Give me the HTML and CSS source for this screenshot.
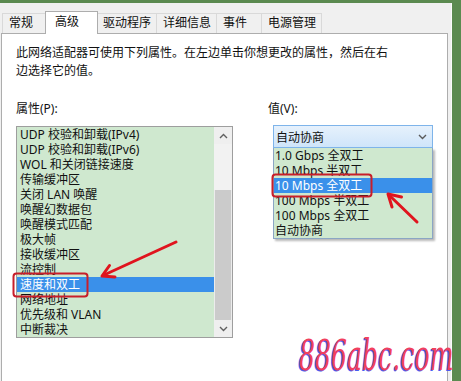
FILE: index.html
```html
<!DOCTYPE html>
<html lang="zh-CN">
<head>
<meta charset="utf-8">
<link rel="stylesheet" href="styles.css">
</head>
<body>
<div class="window">
  <div class="tabs">
    <div class="tab">常规</div>
    <div class="tab active">高级</div>
    <div class="tab">驱动程序</div>
    <div class="tab">详细信息</div>
    <div class="tab">事件</div>
    <div class="tab">电源管理</div>
  </div>
  <div class="panel">
    <p class="desc">此网络适配器可使用下列属性。在左边单击你想更改的属性，然后在右<br>边选择它的值。</p>
    <div class="cols">
      <div class="col-left">
        <div class="label">属性(P):</div>
        <div class="listbox">
          <ul class="items">
            <li>UDP 校验和卸载(IPv4)</li>
            <li>UDP 校验和卸载(IPv6)</li>
            <li>WOL 和关闭链接速度</li>
            <li>传输缓冲区</li>
            <li>关闭 LAN 唤醒</li>
            <li>唤醒幻数据包</li>
            <li>唤醒模式匹配</li>
            <li>极大帧</li>
            <li>接收缓冲区</li>
            <li>流控制</li>
            <li class="sel">速度和双工</li>
            <li>网络地址</li>
            <li>优先级和 VLAN</li>
            <li>中断裁决</li>
          </ul>
          <div class="scrollbar">
            <div class="sb-btn"><svg width="9" height="6" viewBox="0 0 9 6"><polyline points="1,5 4.5,1.5 8,5" fill="none" stroke="#606060" stroke-width="1.4"/></svg></div>
            <div class="sb-track"></div>
            <div class="sb-thumb"></div>
            <div class="sb-btn"><svg width="9" height="6" viewBox="0 0 9 6"><polyline points="1,1 4.5,4.5 8,1" fill="none" stroke="#606060" stroke-width="1.4"/></svg></div>
          </div>
        </div>
      </div>
      <div class="col-right">
        <div class="label">值(V):</div>
        <div class="combo-wrap">
          <div class="combo">
            <span>自动协商</span>
            <svg width="9" height="6" viewBox="0 0 9 6"><polyline points="1,1 4.5,4.5 8,1" fill="none" stroke="#5a5a5a" stroke-width="1.4"/></svg>
          </div>
          <ul class="dropdown">
            <li>1.0 Gbps 全双工</li>
            <li>10 Mbps 半双工</li>
            <li class="sel">10 Mbps 全双工</li>
            <li>100 Mbps 半双工</li>
            <li>100 Mbps 全双工</li>
            <li>自动协商</li>
          </ul>
        </div>
      </div>
    </div>
  </div>
</div>
<svg class="marks" width="461" height="381" viewBox="0 0 461 381">
  <g fill="none" stroke="#e0141e" stroke-width="3" stroke-linecap="round" stroke-linejoin="round">
    <line x1="176" y1="242" x2="104" y2="275"/>
    <polyline points="109.5,265.5 102,276 115,277"/>
    <line x1="417" y1="222" x2="390" y2="196"/>
    <polyline points="392,207 388,194 401.5,197"/>
  </g>
  <g fill="none" stroke="#c81e2a" stroke-width="2">
    <rect x="13.5" y="273.5" width="74" height="23" rx="3"/>
    <rect x="272.5" y="174.5" width="99" height="22" rx="3"/>
  </g>
</svg>
<div class="watermark">886abc.com</div>
</body>
</html>
```

FILE: styles.css
```css
html, body {
  margin: 0;
  padding: 0;
}
body {
  width: 461px;
  height: 381px;
  overflow: hidden;
  background: #5b8a50;
  position: relative;
  font-family: "Noto Sans", "Noto Sans CJK SC", sans-serif;
  font-size: 12px;
  color: #111;
}
.window {
  margin-top: 3px;
  width: 452px;
  height: 378px;
  box-sizing: border-box;
  background: #f0f0f0;
  border-right: 1px solid #fbfbfb;
  padding: 8px 0 0 1px;
}
.tabs {
  display: flex;
  align-items: flex-end;
  height: 23px;
  padding-left: 1px;
  margin-bottom: -1px;
  position: relative;
  z-index: 1;
}
.tab {
  box-sizing: border-box;
  height: 20px;
  margin-bottom: 1px;
  min-width: 46px;
  padding: 0 5px 0 6px;
  border: 1px solid #d9d9d9;
  border-bottom: none;
  margin-right: -1px;
  background: #f0f0f0;
  line-height: 18px;
  white-space: nowrap;
}
.tab.active {
  height: 23px;
  margin-bottom: 0;
  width: 53px;
  margin-left: -2px;
  margin-right: -2px;
  padding-left: 9px;
  background: #fff;
  border-color: #adadad;
  line-height: 20px;
  position: relative;
  z-index: 2;
}
.panel {
  box-sizing: border-box;
  width: 447px;
  height: 360px;
  background: #fff;
  border: 1px solid #adadad;
  padding: 10px 0 0 14px;
}
.desc {
  margin: 0;
  line-height: 18px;
}
.cols {
  display: flex;
  margin-top: 20px;
  gap: 35px;
}
.label {
  line-height: 18px;
}
.col-left {
  width: 217px;
}
.listbox {
  margin-top: 8px;
  display: flex;
  height: 212px;
  box-sizing: border-box;
  border: 1px solid #9e9e9e;
  background: #cfe8cf;
}
.items {
  list-style: none;
  margin: 0;
  padding: 0;
  flex: 1;
}
.items li {
  height: 15px;
  line-height: 15px;
  padding-left: 3px;
  white-space: nowrap;
}
.items li.sel,
.dropdown li.sel {
  background: #3a90ea;
  color: #fff;
}
.scrollbar {
  width: 18px;
  display: flex;
  flex-direction: column;
  background: #ececec;
}
.sb-btn {
  height: 17px;
  display: flex;
  align-items: center;
  justify-content: center;
  background: #efefef;
}
.sb-track {
  height: 46px;
  background: #f2f2f2;
}
.sb-thumb {
  height: 130px;
  margin: 0 1px;
  background: #cbcbcb;
}
.col-right {
  width: 170px;
}
.combo-wrap {
  position: relative;
  margin: 7px 0 0 5px;
  width: 160px;
}
.combo {
  box-sizing: border-box;
  height: 23px;
  border: 1px solid #7eb4ea;
  background: linear-gradient(#e6f1fc, #cfe5fa);
  display: flex;
  align-items: center;
  justify-content: space-between;
  padding: 0 5px 0 2px;
}
.dropdown {
  position: absolute;
  top: 23px;
  left: 0;
  width: 160px;
  box-sizing: border-box;
  margin: 0;
  padding: 0;
  list-style: none;
  border: 1px solid #8ba6c4;
  border-top: none;
  background: #cfe8cf;
  box-shadow: 2px 2px 2px rgba(0, 0, 0, 0.28);
}
.dropdown li {
  height: 15px;
  line-height: 15px;
  padding-left: 1px;
  white-space: nowrap;
}
.marks {
  position: absolute;
  left: 0;
  top: 0;
  pointer-events: none;
}
.watermark {
  position: absolute;
  left: 299px;
  top: 331px;
  font-family: "DejaVu Serif", serif;
  font-style: italic;
  font-size: 42px;
  line-height: 50px;
  color: #f2405e;
  text-shadow: -2px 1px 0 #4a5cf0;
  transform: scaleX(0.6);
  transform-origin: left top;
  white-space: nowrap;
}
```
